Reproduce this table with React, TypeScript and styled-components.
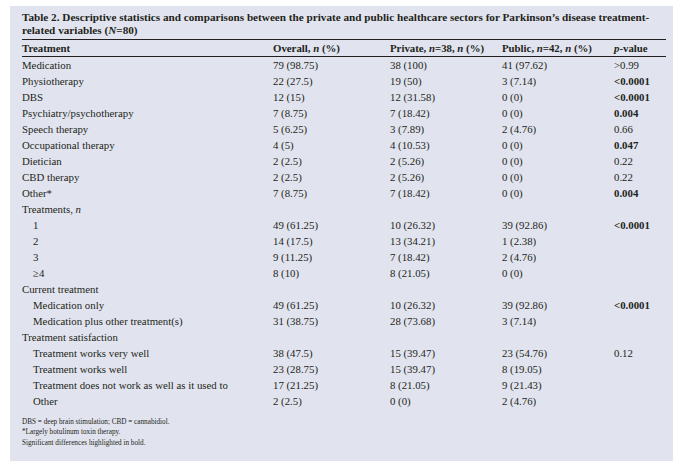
import React from 'react';
import styled, { createGlobalStyle } from 'styled-components';

const GlobalStyle = createGlobalStyle`
  html, body {
    margin: 0;
    padding: 0;
    background: #ffffff;
  }
  body {
    font-family: "Liberation Serif", "Times New Roman", serif;
    color: #231f20;
  }
`;

const Page = styled.div`
  padding: 6px 0 0 10px;
`;

const Panel = styled.div`
  width: 663px;
  height: 455px;
  box-sizing: border-box;
  background: #e1e4ee;
  padding: 5px 7px 0 12px;
`;

const Title = styled.div`
  font-weight: bold;
  font-size: 11.2px;
  line-height: 13px;
  padding-bottom: 2px;
`;

const Grid = styled.div`
  display: flex;
  flex-direction: column;
`;

const Row = styled.div<{ $head?: boolean }>`
  display: grid;
  grid-template-columns: 251px 117px 112px 112px 1fr;
  align-items: center;
  height: 16px;
  font-size: 10.8px;
  font-weight: ${(p) => (p.$head ? 'bold' : 'normal')};
  border-top: ${(p) => (p.$head ? '1.5px solid #231f20' : 'none')};
  border-bottom: ${(p) => (p.$head ? '1.2px solid #231f20' : 'none')};
  white-space: nowrap;
`;

const Label = styled.span<{ $indent?: boolean }>`
  padding-left: ${(p) => (p.$indent ? '11px' : '0')};
`;

const PValue = styled.span<{ $bold?: boolean }>`
  font-weight: ${(p) => (p.$bold ? 'bold' : 'normal')};
`;

const Notes = styled.div`
  margin-top: 8px;
  font-size: 7.2px;
  line-height: 10.4px;
`;

type Item = {
  label: React.ReactNode;
  indent?: boolean;
  overall?: string;
  priv?: string;
  pub?: string;
  p?: string;
  bold?: boolean;
};

const rows: Item[] = [
  { label: 'Medication', overall: '79 (98.75)', priv: '38 (100)', pub: '41 (97.62)', p: '>0.99' },
  { label: 'Physiotherapy', overall: '22 (27.5)', priv: '19 (50)', pub: '3 (7.14)', p: '<0.0001', bold: true },
  { label: 'DBS', overall: '12 (15)', priv: '12 (31.58)', pub: '0 (0)', p: '<0.0001', bold: true },
  { label: 'Psychiatry/psychotherapy', overall: '7 (8.75)', priv: '7 (18.42)', pub: '0 (0)', p: '0.004', bold: true },
  { label: 'Speech therapy', overall: '5 (6.25)', priv: '3 (7.89)', pub: '2 (4.76)', p: '0.66' },
  { label: 'Occupational therapy', overall: '4 (5)', priv: '4 (10.53)', pub: '0 (0)', p: '0.047', bold: true },
  { label: 'Dietician', overall: '2 (2.5)', priv: '2 (5.26)', pub: '0 (0)', p: '0.22' },
  { label: 'CBD therapy', overall: '2 (2.5)', priv: '2 (5.26)', pub: '0 (0)', p: '0.22' },
  { label: 'Other*', overall: '7 (8.75)', priv: '7 (18.42)', pub: '0 (0)', p: '0.004', bold: true },
  { label: <>Treatments, <i>n</i></> },
  { label: '1', indent: true, overall: '49 (61.25)', priv: '10 (26.32)', pub: '39 (92.86)', p: '<0.0001', bold: true },
  { label: '2', indent: true, overall: '14 (17.5)', priv: '13 (34.21)', pub: '1 (2.38)' },
  { label: '3', indent: true, overall: '9 (11.25)', priv: '7 (18.42)', pub: '2 (4.76)' },
  { label: '≥4', indent: true, overall: '8 (10)', priv: '8 (21.05)', pub: '0 (0)' },
  { label: 'Current treatment' },
  { label: 'Medication only', indent: true, overall: '49 (61.25)', priv: '10 (26.32)', pub: '39 (92.86)', p: '<0.0001', bold: true },
  { label: 'Medication plus other treatment(s)', indent: true, overall: '31 (38.75)', priv: '28 (73.68)', pub: '3 (7.14)' },
  { label: 'Treatment satisfaction' },
  { label: 'Treatment works very well', indent: true, overall: '38 (47.5)', priv: '15 (39.47)', pub: '23 (54.76)', p: '0.12' },
  { label: 'Treatment works well', indent: true, overall: '23 (28.75)', priv: '15 (39.47)', pub: '8 (19.05)' },
  { label: 'Treatment does not work as well as it used to', indent: true, overall: '17 (21.25)', priv: '8 (21.05)', pub: '9 (21.43)' },
  { label: 'Other', indent: true, overall: '2 (2.5)', priv: '0 (0)', pub: '2 (4.76)' },
];

export default function App() {
  return (
    <>
      <GlobalStyle />
      <Page>
        <Panel>
          <Title>
            Table 2. Descriptive statistics and comparisons between the private and public healthcare sectors for Parkinson’s disease treatment-
            <br />
            related variables (<i>N</i>=80)
          </Title>
          <Grid>
            <Row $head>
              <span>Treatment</span>
              <span>Overall, <i>n</i> (%)</span>
              <span>Private, <i>n</i>=38, <i>n</i> (%)</span>
              <span>Public, <i>n</i>=42, <i>n</i> (%)</span>
              <span><i>p</i>-value</span>
            </Row>
            {rows.map((r, i) => (
              <Row key={i}>
                <Label $indent={r.indent}>{r.label}</Label>
                <span>{r.overall}</span>
                <span>{r.priv}</span>
                <span>{r.pub}</span>
                <PValue $bold={r.bold}>{r.p}</PValue>
              </Row>
            ))}
          </Grid>
          <Notes>
            DBS = deep brain stimulation; CBD = cannabidiol.
            <br />
            *Largely botulinum toxin therapy.
            <br />
            Significant differences highlighted in bold.
          </Notes>
        </Panel>
      </Page>
    </>
  );
}
